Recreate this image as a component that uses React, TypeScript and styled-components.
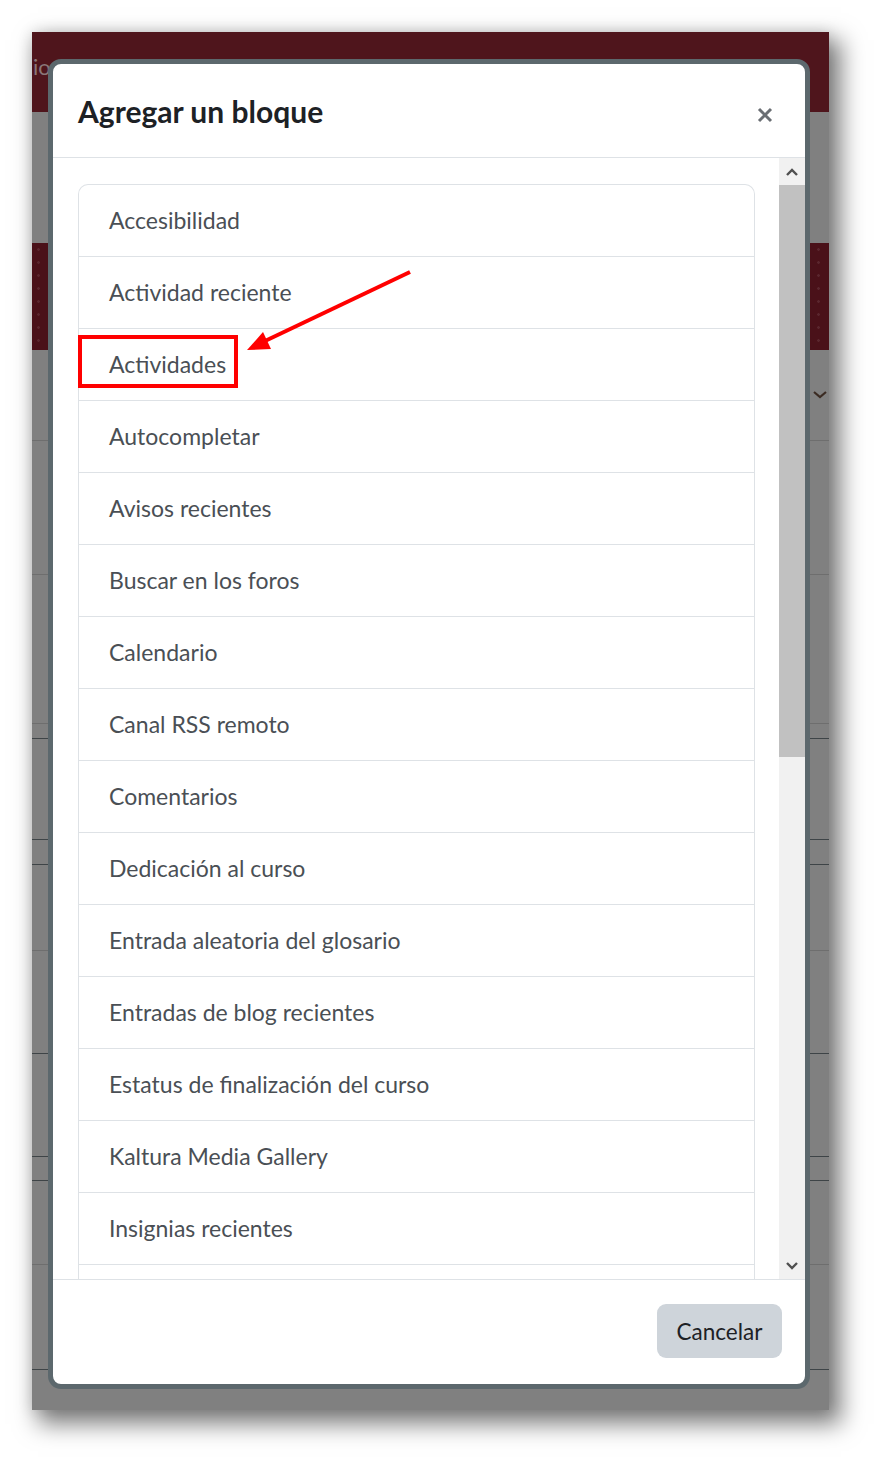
import { createGlobalStyle, styled } from "styled-components";

const blocks = [
  "Accesibilidad",
  "Actividad reciente",
  "Actividades",
  "Autocompletar",
  "Avisos recientes",
  "Buscar en los foros",
  "Calendario",
  "Canal RSS remoto",
  "Comentarios",
  "Dedicación al curso",
  "Entrada aleatoria del glosario",
  "Entradas de blog recientes",
  "Estatus de finalización del curso",
  "Kaltura Media Gallery",
  "Insignias recientes",
  "",
];

// background page rows below the banner (height incl. bottom line)
const pageRows = [
  { h: 91, dark: false },
  { h: 134, dark: false },
  { h: 149, dark: false },
  { h: 15, dark: true },
  { h: 101, dark: true },
  { h: 25, dark: true },
  { h: 86, dark: false },
  { h: 103, dark: true },
  { h: 103, dark: true },
  { h: 24, dark: true },
  { h: 84, dark: false },
  { h: 105, dark: true },
];

const App = () => {
  return (
    <>
      <GlobalStyle />
      <StPage>
        <StFrame>
          <StNavBar>
            <span>io</span>
            <span>Cursos anteriores</span>
            <span>Mis Archivos Multimedia</span>
            <span>Búsqueda de cursos</span>
          </StNavBar>
          <StGreyGap />
          <StBanner />
          {pageRows.map((row, i) => (
            <StPageRow key={i} $h={row.h} $dark={row.dark}>
              {i === 0 && (
                <svg width="14" height="8" viewBox="0 0 14 8">
                  <path d="M1 1l6 5 6-5" fill="none" stroke="#3b2b22" strokeWidth="2.2" />
                </svg>
              )}
            </StPageRow>
          ))}

          <StModal>
            <StHeader>
              <h5>Agregar un bloque</h5>
              <StClose aria-label="Cerrar">
                <svg width="16" height="16" viewBox="0 0 16 16">
                  <path d="M2 2l12 12M14 2L2 14" stroke="#6a6e73" strokeWidth="3" />
                </svg>
              </StClose>
            </StHeader>

            <StBody>
              <StList>
                {blocks.map((name, i) => (
                  <StItem key={i}>
                    {name}
                    {name === "Actividades" && <StHighlight />}
                  </StItem>
                ))}
              </StList>
              <StScrollbar>
                <StScrollBtn>
                  <svg width="12" height="8" viewBox="0 0 12 8">
                    <path d="M1 7l5-5 5 5" fill="none" stroke="#505050" strokeWidth="2.4" />
                  </svg>
                </StScrollBtn>
                <StThumb />
                <StScrollBtn>
                  <svg width="12" height="8" viewBox="0 0 12 8">
                    <path d="M1 1l5 5 5-5" fill="none" stroke="#505050" strokeWidth="2.4" />
                  </svg>
                </StScrollBtn>
              </StScrollbar>
            </StBody>

            <StFooter>
              <StCancelBtn>Cancelar</StCancelBtn>
            </StFooter>
          </StModal>
        </StFrame>

        <StArrow width="180" height="95" viewBox="0 0 180 95">
          <line x1="170" y1="7" x2="25" y2="76" stroke="#ff0000" strokeWidth="4" />
          <polygon points="7,85 31,84 23,67" fill="#ff0000" />
        </StArrow>
      </StPage>
    </>
  );
};

export default App;

const GlobalStyle = createGlobalStyle`
  body {
    margin: 0;
    background: #ffffff;
    font-family: Lato, "Liberation Sans", sans-serif;
  }
  * {
    box-sizing: border-box;
  }
`;

const StPage = styled.div`
  position: relative;
  width: 894px;
  height: 1475px;
  padding: 32px 65px 65px 32px;
`;

const StFrame = styled.div`
  position: relative;
  display: flex;
  flex-direction: column;

  width: 797px;
  height: 1378px;
  overflow: hidden;

  background: #808080;
  box-shadow: 9px 11px 22px 3px rgba(0, 0, 0, 0.5), 0 0 14px rgba(0, 0, 0, 0.12);
`;

const StNavBar = styled.div`
  display: flex;
  align-items: flex-start;
  gap: 58px;
  flex-shrink: 0;

  height: 80px;
  padding: 21px 0 0 1px;

  background: #4f151c;
  color: #8a7678;
  font-size: 22px;
  white-space: nowrap;

  & > span:nth-child(2) {
    margin-left: -17px;
  }
`;

const StGreyGap = styled.div`
  flex-shrink: 0;
  height: 131px;
`;

const StBanner = styled.div`
  flex-shrink: 0;
  height: 107px;
  background-color: #4a1119;
  background-image: radial-gradient(rgba(255, 255, 255, 0.09) 1px, transparent 1.6px);
  background-size: 13px 13px;
`;

const StPageRow = styled.div<{ $h: number; $dark: boolean }>`
  display: flex;
  align-items: center;
  justify-content: flex-end;
  flex-shrink: 0;

  height: ${({ $h }) => $h}px;
  padding-right: 2px;
  border-bottom: 1px solid ${({ $dark }) => ($dark ? "#3e4447" : "#6e6e6e")};
`;

const StModal = styled.div`
  position: absolute;
  top: 27px;
  left: 16px;

  display: flex;
  flex-direction: column;

  width: 762px;
  height: 1330px;
  overflow: hidden;

  border: 5px solid #5c686d;
  border-radius: 13px;
  background: #ffffff;
`;

const StHeader = styled.div`
  display: flex;
  align-items: center;
  justify-content: space-between;
  flex-shrink: 0;

  height: 94px;
  padding: 0 32px 0 25px;
  border-bottom: 1px solid #dee2e6;

  & > h5 {
    margin: 0;
    color: #1d2125;
    font-size: 30px;
    font-weight: 700;
    letter-spacing: 0;
  }
`;

const StClose = styled.button`
  display: flex;
  padding: 0;
  margin-top: 8px;
  border: 0;
  background: none;
`;

const StBody = styled.div`
  display: flex;
  gap: 24px;
  flex: 1;
  min-height: 0;
  overflow: hidden;

  padding-left: 25px;
`;

const StList = styled.div`
  display: flex;
  flex-direction: column;
  flex-shrink: 0;

  width: 677px;
  margin-top: 26px;

  border: 1px solid #dee2e6;
  border-bottom: 0;
  border-radius: 10px 10px 0 0;
`;

const StItem = styled.div`
  position: relative;
  display: flex;
  align-items: center;
  flex-shrink: 0;

  height: 72px;
  padding: 0 0 1px 30px;
  border-bottom: 1px solid #dee2e6;

  color: #4a4f55;
  font-size: 23px;
  letter-spacing: 0;
`;

const StHighlight = styled.span`
  position: absolute;
  top: 6px;
  left: -1px;

  width: 160px;
  height: 53px;
  border: 4px solid #ff0000;
`;

const StScrollbar = styled.div`
  display: flex;
  flex-direction: column;
  flex-shrink: 0;

  width: 26px;
  background: #f1f1f1;
`;

const StScrollBtn = styled.div`
  display: flex;
  align-items: center;
  justify-content: center;
  flex-shrink: 0;

  height: 27px;
  margin-top: auto;

  &:first-child {
    margin-top: 0;
  }
`;

const StThumb = styled.div`
  flex-shrink: 0;
  height: 572px;
  background: #c1c1c1;
`;

const StFooter = styled.div`
  display: flex;
  align-items: flex-start;
  justify-content: flex-end;
  flex-shrink: 0;

  height: 105px;
  padding: 24px 23px 0 0;
  border-top: 1px solid #dee2e6;
`;

const StCancelBtn = styled.button`
  width: 125px;
  height: 54px;

  border: 0;
  border-radius: 9px;
  background: #ced4da;

  color: #1d2125;
  font-family: Lato, "Liberation Sans", sans-serif;
  font-size: 22.5px;
`;

const StArrow = styled.svg`
  position: absolute;
  top: 265px;
  left: 240px;
`;
